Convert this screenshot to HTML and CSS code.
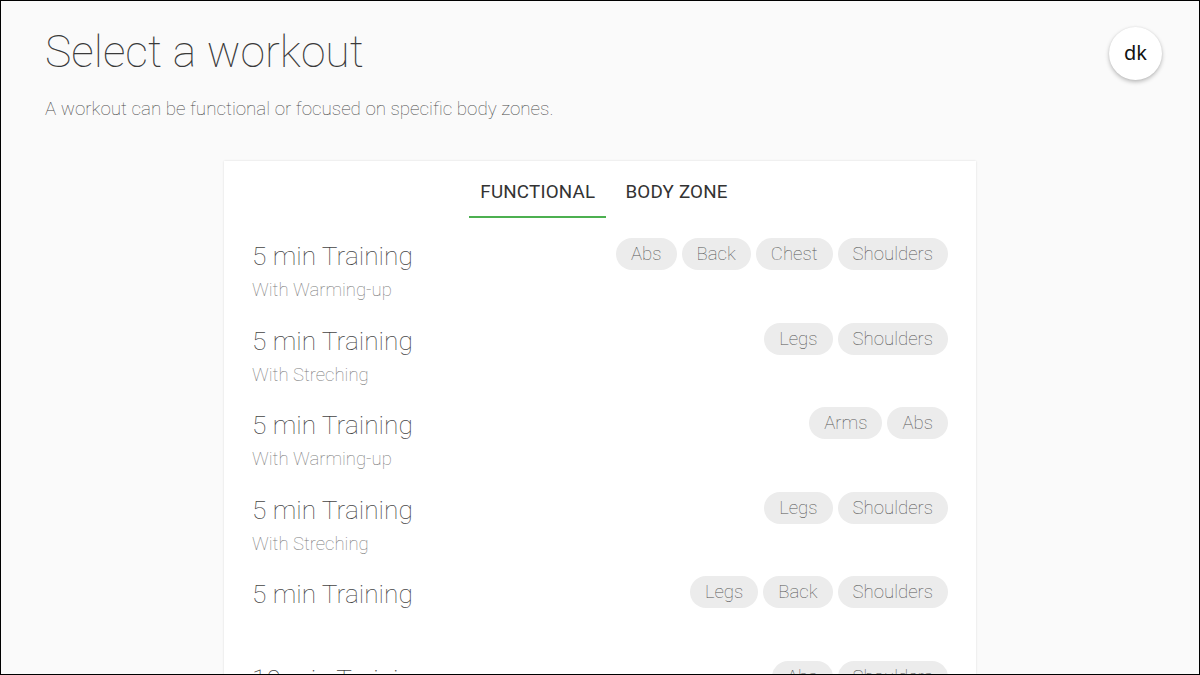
FILE: index.html
```html
<!DOCTYPE html>
<html>
<head>
<meta charset="utf-8">
<link rel="stylesheet" href="styles.css">
</head>
<body>
<div class="screen">
  <header class="header">
    <div class="heading">
      <h1 class="title">Select a workout</h1>
      <p class="lead">A workout can be functional or focused on specific body zones.</p>
    </div>
    <div class="avatar">dk</div>
  </header>
  <main class="card">
    <nav class="tabs">
      <div class="tab active">FUNCTIONAL</div>
      <div class="tab">BODY ZONE</div>
    </nav>
    <ul class="list">
      <li class="row">
        <div class="info"><div class="name">5 min Training</div><div class="sub">With Warming-up</div></div>
        <div class="chips"><span class="chip">Abs</span><span class="chip">Back</span><span class="chip">Chest</span><span class="chip">Shoulders</span></div>
      </li>
      <li class="row">
        <div class="info"><div class="name">5 min Training</div><div class="sub">With Streching</div></div>
        <div class="chips"><span class="chip">Legs</span><span class="chip">Shoulders</span></div>
      </li>
      <li class="row">
        <div class="info"><div class="name">5 min Training</div><div class="sub">With Warming-up</div></div>
        <div class="chips"><span class="chip">Arms</span><span class="chip">Abs</span></div>
      </li>
      <li class="row">
        <div class="info"><div class="name">5 min Training</div><div class="sub">With Streching</div></div>
        <div class="chips"><span class="chip">Legs</span><span class="chip">Shoulders</span></div>
      </li>
      <li class="row">
        <div class="info"><div class="name">5 min Training</div></div>
        <div class="chips"><span class="chip">Legs</span><span class="chip">Back</span><span class="chip">Shoulders</span></div>
      </li>
      <li class="row">
        <div class="info"><div class="name">10 min Training</div></div>
        <div class="chips"><span class="chip">Abs</span><span class="chip">Shoulders</span></div>
      </li>
    </ul>
  </main>
</div>
</body>
</html>
```

FILE: styles.css
```css
* { box-sizing: border-box; }
html, body { margin: 0; padding: 0; }
body {
  width: 1200px;
  height: 675px;
  overflow: hidden;
  background: #fafafa;
  font-family: Roboto, "Liberation Sans", sans-serif;
}
.screen {
  width: 1200px;
  height: 675px;
  border: 1px solid #000;
  overflow: hidden;
  display: flex;
  flex-direction: column;
  align-items: center;
}
.header {
  width: 100%;
  display: flex;
  justify-content: space-between;
  align-items: flex-start;
  padding: 0 37px 0 44px;
}
.title {
  margin: 21px 0 0;
  font-weight: 100;
  font-size: 44.5px;
  line-height: 60px;
  color: #3a3a3a;
  letter-spacing: 0;
}
.lead {
  margin: 15px 0 0;
  font-weight: 100;
  font-size: 18.8px;
  line-height: 24px;
  color: #4a4a4a;
}
.avatar {
  margin-top: 26px;
  width: 53px;
  height: 53px;
  border-radius: 50%;
  background: #fff;
  box-shadow: 0 2px 4px rgba(0,0,0,0.25), 0 0 2px rgba(0,0,0,0.08);
  display: flex;
  align-items: center;
  justify-content: center;
  font-family: "Noto Sans", "Open Sans", sans-serif;
  font-size: 20px;
  color: #111;
  padding-bottom: 2px;
}
.card {
  margin-top: 40px;
  width: 752px;
  flex: 1;
  background: #fff;
  box-shadow: 0 0 2px rgba(0,0,0,0.12);
  padding: 0 28px;
}
.tabs {
  display: flex;
  justify-content: center;
  gap: 8px;
  padding-left: 8px;
}
.tab {
  padding: 21px 11px 0;
  height: 57px;
  font-size: 18.8px;
  line-height: 20px;
  color: #333;
  letter-spacing: 0.2px;
}
.tab.active {
  border-bottom: 2px solid #4cb050;
}
.list {
  list-style: none;
  margin: 20px 0 0;
  padding: 0;
}
.row {
  display: flex;
  justify-content: space-between;
  align-items: flex-start;
  height: 84.5px;
}
.name {
  margin-top: 0;
  font-weight: 100;
  font-size: 26.3px;
  line-height: 36px;
  color: #444;
}
.sub {
  font-weight: 100;
  font-size: 18.5px;
  line-height: 32px;
  color: #7a7a7a;
}
.chips {
  display: flex;
  gap: 5px;
}
.chip {
  height: 32px;
  line-height: 32px;
  padding: 0 15px;
  border-radius: 16px;
  background: #ececec;
  font-weight: 100;
  font-size: 18.6px;
  color: #555;
}
```
